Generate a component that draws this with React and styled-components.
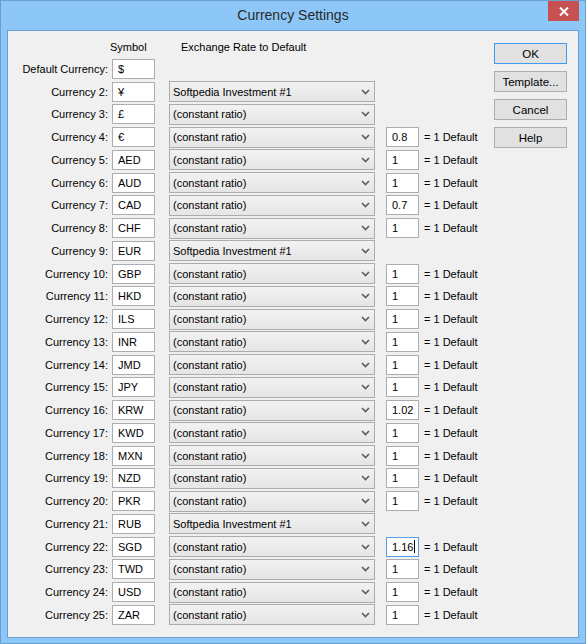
import React from 'react'
import styled, { createGlobalStyle } from 'styled-components'

const Global = createGlobalStyle`
  html, body { margin: 0; padding: 0; background: #ffffff; }
  * { box-sizing: border-box; }
`;

const Frame = styled.div`
  width: 586px;
  height: 644px;
  background: #8cc7f7;
  border: 1px solid #6b9fd3;
  display: flex;
  flex-direction: column;
  padding: 0 6px 5px 6px;
  font-family: "Liberation Sans", Arial, sans-serif;
  font-size: 11px;
  color: #000;
`;

const TitleBar = styled.div`
  height: 29px;
  display: grid;
  grid-template-columns: 1fr auto 1fr;
  align-items: start;
  margin: 0 -6px;
`;

const Title = styled.div`
  grid-column: 2;
  padding-top: 6px;
  font-size: 14px;
  color: #2a2a2a;
`;

const Close = styled.div`
  grid-column: 3;
  justify-self: end;
  width: 31px;
  height: 20px;
  margin-right: 6px;
  background: #c75050;
  display: flex;
  align-items: center;
  justify-content: center;
`;

const Client = styled.div`
  flex: 1;
  background: #f0f0f0;
  border: 1px solid #6a9ed2;
  display: flex;
`;

const Form = styled.div`
  flex: 1;
  padding-top: 9.6px;
  display: flex;
  flex-direction: column;
`;

const Header = styled.div`
  height: 17px;
  display: flex;
  align-items: flex-start;
`;

const HeadCell = styled.div`
  width: ${p => p.$w}px;
  margin-left: ${p => p.$ml || 0}px;
`;

const Row = styled.div`
  height: 22.75px;
  display: flex;
  align-items: center;
`;

const Label = styled.div`
  width: 100px;
  text-align: right;
  white-space: nowrap;
`;

const TextBox = styled.div`
  width: ${p => p.$w}px;
  height: 20px;
  margin-left: ${p => p.$ml}px;
  background: #fff;
  border: 1px solid ${p => (p.$focus ? '#569de5' : '#abadb3')};
  padding-left: 5px;
  display: flex;
  align-items: center;
  white-space: nowrap;
`;

const Caret = styled.span`
  display: inline-block;
  width: 1px;
  height: 13px;
  background: #000;
  margin-left: 1px;
`;

const Select = styled.div`
  width: 206px;
  height: 21px;
  margin-left: 14px;
  background: linear-gradient(#f2f2f2, #e5e5e5);
  border: 1px solid #acacac;
  display: flex;
  align-items: center;
  justify-content: space-between;
  padding: 0 4px 0 3px;
`;

const Ratio = styled.div`
  margin-left: 5px;
  white-space: nowrap;
`;

const Buttons = styled.div`
  width: 73px;
  margin: 12px 11px 0 0;
  display: flex;
  flex-direction: column;
  gap: 7px;
`;

const Button = styled.div`
  height: 21px;
  background: #e1e1e1;
  border: 1px solid ${p => (p.$default ? '#3c9cf0' : '#adadad')};
  display: flex;
  align-items: center;
  justify-content: center;
  font-size: 11.5px;
`;

const Chevron = () => (
  <svg width="9" height="6" viewBox="0 0 9 6">
    <path d="M1 1 L4.5 4.5 L8 1" fill="none" stroke="#5c5c5c" strokeWidth="1.6" />
  </svg>
);

const S = 'Softpedia Investment #1';
const C = '(constant ratio)';

const rows = [
  ['Currency 2:', '¥', S],
  ['Currency 3:', '£', C],
  ['Currency 4:', '€', C, '0.8'],
  ['Currency 5:', 'AED', C, '1'],
  ['Currency 6:', 'AUD', C, '1'],
  ['Currency 7:', 'CAD', C, '0.7'],
  ['Currency 8:', 'CHF', C, '1'],
  ['Currency 9:', 'EUR', S],
  ['Currency 10:', 'GBP', C, '1'],
  ['Currency 11:', 'HKD', C, '1'],
  ['Currency 12:', 'ILS', C, '1'],
  ['Currency 13:', 'INR', C, '1'],
  ['Currency 14:', 'JMD', C, '1'],
  ['Currency 15:', 'JPY', C, '1'],
  ['Currency 16:', 'KRW', C, '1.02'],
  ['Currency 17:', 'KWD', C, '1'],
  ['Currency 18:', 'MXN', C, '1'],
  ['Currency 19:', 'NZD', C, '1'],
  ['Currency 20:', 'PKR', C, '1'],
  ['Currency 21:', 'RUB', S],
  ['Currency 22:', 'SGD', C, '1.16', true],
  ['Currency 23:', 'TWD', C, '1'],
  ['Currency 24:', 'USD', C, '1'],
  ['Currency 25:', 'ZAR', C, '1'],
];

const App = () => {
  return (
    <Frame>
      <Global />
      <TitleBar>
        <Title>Currency Settings</Title>
        <Close>
          <svg width="10" height="9" viewBox="0 0 10 9">
            <path d="M1 0.5 L9 8.5 M9 0.5 L1 8.5" stroke="#fff" strokeWidth="2" />
          </svg>
        </Close>
      </TitleBar>
      <Client>
        <Form>
          <Header>
            <HeadCell $w={40} $ml={102}>Symbol</HeadCell>
            <HeadCell $w={200} $ml={31}>Exchange Rate to Default</HeadCell>
          </Header>
          <Row>
            <Label>Default Currency:</Label>
            <TextBox $w={43} $ml={4}>$</TextBox>
          </Row>
          {rows.map(([label, sym, sel, rate, focus]) => (
            <Row key={label}>
              <Label>{label}</Label>
              <TextBox $w={43} $ml={4}>{sym}</TextBox>
              <Select>
                <span>{sel}</span>
                <Chevron />
              </Select>
              {rate && (
                <>
                  <TextBox $w={33} $ml={11} $focus={focus}>
                    {rate}
                    {focus && <Caret />}
                  </TextBox>
                  <Ratio>= 1 Default</Ratio>
                </>
              )}
            </Row>
          ))}
        </Form>
        <Buttons>
          <Button $default>OK</Button>
          <Button>Template...</Button>
          <Button>Cancel</Button>
          <Button>Help</Button>
        </Buttons>
      </Client>
    </Frame>
  )
}

export default App
